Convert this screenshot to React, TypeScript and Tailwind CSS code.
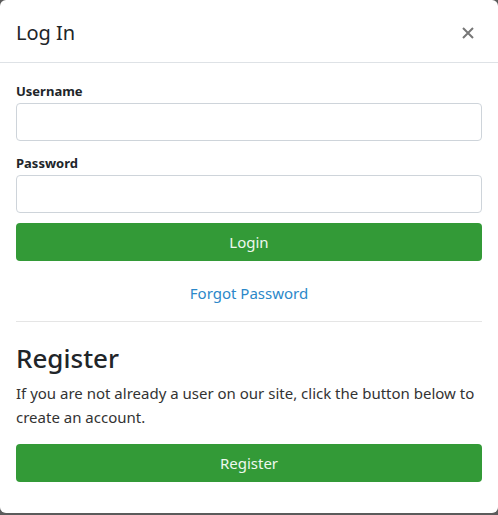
export default function App() {
  const font = { fontFamily: '"Noto Sans", "Open Sans", sans-serif' };
  return (
    <div className="h-[515px] w-full bg-[#5b5b5b]" style={font}>
      <div className="h-[513px] w-full overflow-hidden rounded-md bg-white text-[#212529]">
        <div className="flex h-[63px] items-center justify-between border-b border-[#dee2e6] px-4 pt-[3px]">
          <h5 className="text-[20px] leading-[30px]">Log In</h5>
          <button className="mr-[2px] flex h-6 w-6 items-center justify-center text-[#777]">
            <svg width="12" height="12" viewBox="0 0 12 12" fill="none" stroke="currentColor" strokeWidth="2">
              <path d="M1 1l10 10M11 1L1 11" />
            </svg>
          </button>
        </div>
        <div className="px-4 pt-[18px]">
          <label className="block text-[13px] font-bold leading-[20px]">Username</label>
          <input className="mt-[2px] block h-[38px] w-full rounded border border-[#ced4da] px-3" />
          <label className="mt-[12px] block text-[13px] font-bold leading-[20px]">Password</label>
          <input type="password" className="mt-[2px] block h-[38px] w-full rounded border border-[#ced4da] px-3" />
          <button className="mt-[10px] block h-[38px] w-full rounded bg-[#339a37] text-[15px] text-[#eef8ee]">
            Login
          </button>
          <div className="pt-[20px] pb-[16px] text-center">
            <a href="#" className="text-[15px] leading-[24px] text-[#2b88c9]">Forgot Password</a>
          </div>
          <hr className="border-t border-[#e5e5e5]" />
          <h2 className="mt-[18px] text-[26px] font-medium leading-[36px]">Register</h2>
          <p className="mt-[5px] text-[15px] leading-[24px] text-[#333]">
            If you are not already a user on our site, click the button below to create an account.
          </p>
          <button className="mt-[15px] block h-[38px] w-full rounded bg-[#339a37] text-[15px] text-[#eef8ee]">
            Register
          </button>
        </div>
      </div>
    </div>
  );
}
